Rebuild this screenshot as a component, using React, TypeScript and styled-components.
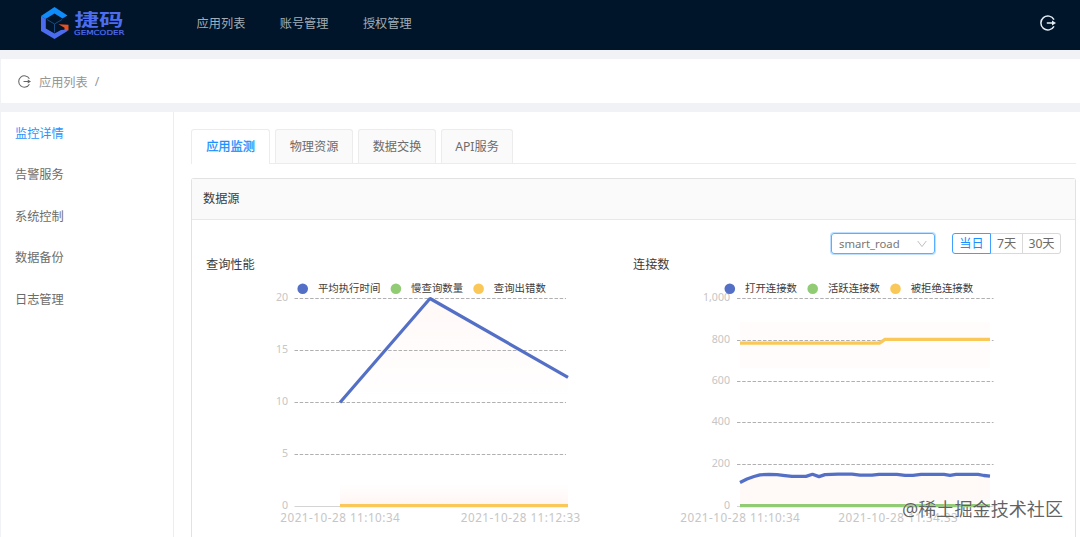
import React from 'react';
import styled, { createGlobalStyle, css } from 'styled-components';

const GlobalStyle = createGlobalStyle`
  * { box-sizing: border-box; }
  body {
    margin: 0;
    background: #f0f2f5;
    color: #666;
    font-family: "Noto Sans", "Noto Sans CJK SC", sans-serif;
    font-size: 12.2px;
    overflow: hidden;
  }
`;

const Page = styled.div`
  position: relative;
  display: flex;
  flex-direction: column;
  height: 537px;
  overflow: hidden;
`;

const Header = styled.header`
  display: flex;
  align-items: center;
  flex: none;
  height: 50px;
  padding: 0 24px 4px 40px;
  background: #001529;
`;

const Nav = styled.nav`
  display: flex;
  flex: 1;
  gap: 34.4px;
  margin-left: 70.6px;
  padding-top: 1px;
  color: #a3adb6;
  line-height: 20px;
`;

const NavItem = styled.span`
  white-space: nowrap;
`;

const Breadcrumb = styled.div`
  display: flex;
  align-items: center;
  flex: none;
  height: 44px;
  margin: 9px 0 9px 1px;
  padding: 1px 17px 0;
  background: #fff;
  color: #959595;
`;

const Crumb = styled.span`
  margin: 0 7px 0 8px;
`;

const Body = styled.div`
  display: flex;
  flex: 1;
  min-height: 0;
  margin-left: 1px;
  background: #fff;
`;

const Sidebar = styled.aside`
  display: flex;
  flex-direction: column;
  flex: none;
  width: 173px;
  padding-top: 0.6px;
  border-right: 1px solid #ebedf0;
`;

const SideItem = styled.div<{ $active?: boolean }>`
  height: 41.6px;
  padding-left: 14px;
  line-height: 42px;
  color: ${p => (p.$active ? '#2b93fb' : '#6c6c6c')};
`;

const Main = styled.main`
  display: flex;
  flex-direction: column;
  flex: 1;
  min-width: 0;
  padding: 17px 4px 0 17px;
`;

const Tabs = styled.div`
  display: flex;
  gap: 5px;
  flex: none;
  height: 35px;
  border-bottom: 1px solid #ececec;
`;

const Tab = styled.div<{ $active?: boolean; $w: number }>`
  width: ${p => p.$w}px;
  height: 34px;
  border: 1px solid #ececec;
  border-bottom: 0;
  border-radius: 3px 3px 0 0;
  background: #fafafa;
  line-height: 34px;
  text-align: center;
  white-space: nowrap;
  color: #6c6c6c;
  ${p => p.$active && css`
    height: 35px;
    background: #fff;
    color: #1890ff;
    -webkit-text-stroke: 0.3px #1890ff;
  `}
`;

const Card = styled.section`
  display: flex;
  flex-direction: column;
  flex: 1;
  margin-top: 14px;
  border: 1px solid #e2e2e2;
  border-bottom: 0;
  border-radius: 3px 3px 0 0;
`;

const CardHeader = styled.div`
  flex: none;
  height: 41px;
  padding-left: 11px;
  border-bottom: 1px solid #e8e8e8;
  background: #fafafa;
  color: #3c3c3c;
  line-height: 40px;
`;

const Controls = styled.div`
  display: flex;
  justify-content: flex-end;
  flex: none;
  gap: 17px;
  height: 22px;
  margin: 13px 14px 0 0;
`;

const Select = styled.div`
  display: flex;
  align-items: center;
  justify-content: space-between;
  width: 104px;
  height: 21px;
  padding: 0 7px;
  border: 1px solid #59b0ff;
  border-radius: 3px;
  box-shadow: 0 0 0 1px #bfe0ff;
  color: #777;
  font-size: 11.3px;
`;

const RadioGroup = styled.div`
  display: flex;
  height: 21px;
`;

const Radio = styled.div<{ $active?: boolean; $w: number }>`
  width: ${p => p.$w}px;
  border: 1px solid ${p => (p.$active ? '#40a0ff' : '#d9d9d9')};
  border-left-width: ${p => (p.$active ? 1 : 0)}px;
  color: ${p => (p.$active ? '#1890ff' : '#6c6c6c')};
  line-height: 20px;
  text-align: center;
  &:first-child { border-radius: 3px 0 0 3px; }
  &:last-child { border-radius: 0 3px 3px 0; }
`;

const Charts = styled.div`
  display: grid;
  grid-template-columns: 427px 1fr;
  padding-left: 14px;
`;

const ChartTitle = styled.div`
  height: 19px;
  color: #3c3c3c;
  line-height: 19px;
`;

const ChartSvg = styled.svg`
  display: block;
  overflow: visible;
  font-family: "Noto Sans", "Noto Sans CJK SC", sans-serif;
`;

const Watermark = styled.div`
  position: absolute;
  left: 902px;
  top: 496px;
  color: rgba(70, 70, 70, 0.85);
  font-size: 18.1px;
  line-height: 26px;
  white-space: nowrap;
  text-shadow: 0 0 1px #fff;
`;

const ExitIcon = ({ size, color, width }: { size: number; color: string; width: number }) => (
  <svg width={size} height={size} viewBox="0 0 16 16" fill="none" stroke={color} strokeWidth={width}>
    <path d="M14 4.6A7 7 0 1 0 14 11.4" />
    <path d="M6.8 8H13" />
    <path d="M12 5.6 16 8l-4 2.4z" fill={color} stroke="none" />
  </svg>
);

const Logo = () => (
  <svg width="86" height="36" viewBox="40 6 86 36">
    <path d="M41 17 54.5 8 67.5 16.5 62.5 19.5 54.5 14.5 45.5 20z" fill="#0f8cfa" />
    <path d="M41 17 45.8 20V29.5L54.5 34.5 61 31 67.5 30.5V32L54.5 40 41 32z" fill="#4c6cf0" />
    <path d="M47 20.5 54.5 25 62 20.5M54.5 25V33.5" fill="none" stroke="#174b82" strokeWidth="1" />
    <path d="M58.5 25.2 68.5 25.8V31.5L64.5 31V28.8z" fill="#e8501f" />
    <text x="74.5" y="26.7" fontSize="17.6" fontWeight="700" fill="#4d6df0" textLength="49" lengthAdjust="spacingAndGlyphs" fontFamily="'Noto Sans CJK SC', sans-serif">捷码</text>
    <text x="74" y="36.2" fontSize="6.8" fill="#4f6cf0" stroke="#4f6cf0" strokeWidth="0.2" textLength="50.5" lengthAdjust="spacingAndGlyphs" fontFamily="'DejaVu Sans', sans-serif">GEMCODER</text>
  </svg>
);

type LegendEntry = { x: number; color: string; label: string; width: number };
type AxisTick = { y: number; label: string };
type DateTick = { x: number; label: string };

const Legend = ({ items }: { items: LegendEntry[] }) => (
  <>
    {items.map(i => (
      <g key={i.label}>
        <circle cx={i.x} cy="288.7" r="5.3" fill={i.color} />
        <text x={i.x + 15.2} y="291.6" fontSize="10.4" fill="#3c3c3c" textLength={i.width}>{i.label}</text>
      </g>
    ))}
  </>
);

const Axes = ({ ticks, dates, x1, x2, labelX }: { ticks: AxisTick[]; dates: DateTick[]; x1: number; x2: number; labelX: number }) => (
  <>
    {ticks.map(t => (
      <g key={t.label}>
        <text x={labelX} y={t.y + 2.6} fontSize="10.6" fill="#c6c6c6" textAnchor="end">{t.label}</text>
        <line x1={x1} x2={x2} y1={t.y} y2={t.y} stroke={t.label === '0' ? '#d4d4d4' : '#b0b0b0'} strokeDasharray={t.label === '0' ? undefined : '3.5 1.7'} />
      </g>
    ))}
    {dates.map(d => (
      <text key={d.label} x={d.x} y="521.8" fontSize="11.7" fill="#c6c6c6" textLength="119.5">{d.label}</text>
    ))}
  </>
);

const BLUE = '#5470c6';
const GREEN = '#91cc75';
const YELLOW = '#fac858';

const connectionPath =
  'M740 482.5 747 479 754 476.5 760 474.8 769 474.3 777 474.6 785 475.6 792 476.4H806L812.5 474.3 819 476.6 825 474.6 838 474.2H852L860 475.2H872L879 474.3H897L905 475.3H913L921 474.4H944L950 475.3 956 474.3H978L984 475.5 990 476.2';

const QueryChart = () => (
  <ChartSvg width="427" height="263" viewBox="206 274 427 263">
    <defs>
      <linearGradient id="queryFill" x1="0" y1="0" x2="0" y2="1">
        <stop offset="0" stopColor="#ff8a65" stopOpacity="0.05" />
        <stop offset="1" stopColor="#ff8a65" stopOpacity="0" />
      </linearGradient>
      <linearGradient id="baseFill" x1="0" y1="1" x2="0" y2="0">
        <stop offset="0" stopColor="#ff8a65" stopOpacity="0.08" />
        <stop offset="1" stopColor="#ff8a65" stopOpacity="0" />
      </linearGradient>
    </defs>
    <path d="M340 402 430 298.5 568 377V402z" fill="url(#queryFill)" />
    <rect x="340" y="484" width="228" height="21" fill="url(#baseFill)" />
    <Axes
      x1={294.5}
      x2={566}
      labelX={288}
      ticks={[
        { y: 298.5, label: '20' },
        { y: 350.5, label: '15' },
        { y: 402.5, label: '10' },
        { y: 454.5, label: '5' },
        { y: 506.5, label: '0' },
      ]}
      dates={[
        { x: 280.3, label: '2021-10-28 11:10:34' },
        { x: 460.8, label: '2021-10-28 11:12:33' },
      ]}
    />
    <path d="M340 402.5 430 298.5 568 377.3" fill="none" stroke={BLUE} strokeWidth="3.2" strokeLinejoin="bevel" />
    <path d="M340 505.7H568" stroke={YELLOW} strokeWidth="3.2" />
    <Legend
      items={[
        { x: 302.7, color: BLUE, label: '平均执行时间', width: 62.4 },
        { x: 395.9, color: GREEN, label: '慢查询数量', width: 52 },
        { x: 478.6, color: YELLOW, label: '查询出错数', width: 52 },
      ]}
    />
  </ChartSvg>
);

const ConnectionChart = () => (
  <ChartSvg width="427" height="263" viewBox="633 274 427 263">
    <rect x="740" y="322" width="250" height="46" fill="#ff8a65" fillOpacity="0.025" />
    <path d={`${connectionPath}V505H740z`} fill="#ff8a65" fillOpacity="0.05" />
    <Axes
      x1={737}
      x2={993.5}
      labelX={730}
      ticks={[
        { y: 298.5, label: '1,000' },
        { y: 340.5, label: '800' },
        { y: 381.5, label: '600' },
        { y: 422.5, label: '400' },
        { y: 464.5, label: '200' },
        { y: 506.5, label: '0' },
      ]}
      dates={[
        { x: 680.3, label: '2021-10-28 11:10:34' },
        { x: 838.3, label: '2021-10-28 11:34:33' },
      ]}
    />
    <path d="M740 343.2H879.5L885 339.4H990" fill="none" stroke={YELLOW} strokeWidth="3.3" />
    <path d={connectionPath} fill="none" stroke={BLUE} strokeWidth="3.3" strokeLinejoin="round" />
    <path d="M740 505.6H990" stroke={GREEN} strokeWidth="3.2" />
    <Legend
      items={[
        { x: 729.8, color: BLUE, label: '打开连接数', width: 52 },
        { x: 812.7, color: GREEN, label: '活跃连接数', width: 52 },
        { x: 895.5, color: YELLOW, label: '被拒绝连接数', width: 62.4 },
      ]}
    />
  </ChartSvg>
);

export default function App() {
  return (
    <Page>
      <GlobalStyle />
      <Header>
        <Logo />
        <Nav>
          <NavItem>应用列表</NavItem>
          <NavItem>账号管理</NavItem>
          <NavItem>授权管理</NavItem>
        </Nav>
        <ExitIcon size={16} color="#e3edf5" width={1.5} />
      </Header>
      <Breadcrumb>
        <ExitIcon size={13} color="#666" width={1.3} />
        <Crumb>应用列表</Crumb>/
      </Breadcrumb>
      <Body>
        <Sidebar>
          <SideItem $active>监控详情</SideItem>
          <SideItem>告警服务</SideItem>
          <SideItem>系统控制</SideItem>
          <SideItem>数据备份</SideItem>
          <SideItem>日志管理</SideItem>
        </Sidebar>
        <Main>
          <Tabs>
            <Tab $active $w={79}>应用监测</Tab>
            <Tab $w={78}>物理资源</Tab>
            <Tab $w={78}>数据交换</Tab>
            <Tab $w={72}>API服务</Tab>
          </Tabs>
          <Card>
            <CardHeader>数据源</CardHeader>
            <Controls>
              <Select>
                smart_road
                <svg width="10" height="8" viewBox="0 0 10 8" fill="none" stroke="#bfbfbf">
                  <path d="M.7 1 5 6.6 9.3 1" />
                </svg>
              </Select>
              <RadioGroup>
                <Radio $active $w={39}>当日</Radio>
                <Radio $w={32}>7天</Radio>
                <Radio $w={38}>30天</Radio>
              </RadioGroup>
            </Controls>
            <Charts>
              <div>
                <ChartTitle>查询性能</ChartTitle>
                <QueryChart />
              </div>
              <div>
                <ChartTitle>连接数</ChartTitle>
                <ConnectionChart />
              </div>
            </Charts>
          </Card>
        </Main>
      </Body>
      <Watermark>@稀土掘金技术社区</Watermark>
    </Page>
  );
}
